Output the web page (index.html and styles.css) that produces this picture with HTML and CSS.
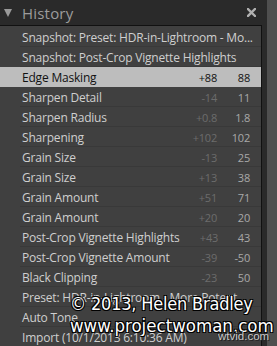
FILE: index.html
```html
<!DOCTYPE html>
<html lang="en">

<head>
    <meta charset="UTF-8">
    <title>History</title>
    <link rel="stylesheet" href="styles.css">
</head>

<body>
    <div class="panel">
        <div class="main">
            <div class="header">
                <span class="arrow"></span>
                <h1>History</h1>
                <svg class="close" width="9" height="9" viewBox="0 0 9 9">
                    <path d="M1 1 L8 8 M8 1 L1 8" stroke="#b0b0b0" stroke-width="2.4" stroke-linecap="square" />
                </svg>
            </div>
            <ul class="list">
                <li><span class="name">Snapshot: Preset: HDR-in-Lightroom - Mo...</span></li>
                <li><span class="name">Snapshot: Post-Crop Vignette Highlights</span></li>
                <li class="selected"><span class="name">Edge Masking</span><span class="delta">+88</span><span class="value">88</span></li>
                <li><span class="name">Sharpen Detail</span><span class="delta">-14</span><span class="value">11</span></li>
                <li><span class="name">Sharpen Radius</span><span class="delta">+0.8</span><span class="value">1.8</span></li>
                <li><span class="name">Sharpening</span><span class="delta">+102</span><span class="value">102</span></li>
                <li><span class="name">Grain Size</span><span class="delta">-13</span><span class="value">25</span></li>
                <li><span class="name">Grain Size</span><span class="delta">+13</span><span class="value">38</span></li>
                <li><span class="name">Grain Amount</span><span class="delta">+51</span><span class="value">71</span></li>
                <li><span class="name">Grain Amount</span><span class="delta">+20</span><span class="value">20</span></li>
                <li><span class="name">Post-Crop Vignette Highlights</span><span class="delta">+43</span><span class="value">43</span></li>
                <li><span class="name">Post-Crop Vignette Amount</span><span class="delta">-39</span><span class="value">-50</span></li>
                <li><span class="name">Black Clipping</span><span class="delta">-23</span><span class="value">50</span></li>
                <li><span class="name">Preset: HDR-in-Lightroom - More Potent</span></li>
                <li><span class="name">Auto Tone</span></li>
                <li><span class="name">Import (10/1/2013 6:10:36 AM)</span></li>
            </ul>
        </div>
        <div class="strip"></div>
    </div>

    <!-- watermark -->
    <div class="mark">
        <div class="copy">© 2013, Helen Bradley</div>
        <div class="site">www.projectwoman.com</div>
    </div>
    <div class="tag">wtvid.com</div>
</body>

</html>
```

FILE: styles.css
```css
body {
    margin: 0;
    width: 277px;
    height: 346px;
    overflow: hidden;
    background-color: #2a2a2a;
    font-family: 'Open Sans', sans-serif;
    position: relative;
}

.panel {
    display: flex;
    height: 346px;
}

.main {
    width: 267px;
    background-color: #2a2a2a;
}

.strip {
    width: 10px;
    background-color: #4f4f4f;
}

.header {
    display: flex;
    align-items: center;
    height: 25px;
    padding-left: 4px;
    padding-right: 11px;
}

.arrow {
    width: 0;
    height: 0;
    border-left: 4px solid transparent;
    border-right: 4px solid transparent;
    border-top: 8px solid #9a9a9a;
    margin-top: 1px;
}

.header h1 {
    flex: 1;
    margin: 0 0 0 10px;
    font-size: 15px;
    font-weight: normal;
    color: #9c9c9c;
    letter-spacing: 0.2px;
}

.list {
    list-style: none;
    margin: 0;
    padding: 1px 0 0 0;
    width: 261px;
    height: 320px;
    background-color: #404040;
    border-top: 1px solid #111;
    border-right: 1px solid #111;
    overflow: hidden;
}

.list li {
    display: flex;
    align-items: center;
    height: 20px;
    padding-left: 22px;
    padding-right: 11px;
    font-size: 12px;
    letter-spacing: -0.2px;
    color: #cfcfcf;
    box-shadow: inset 20px 0 0 #404040, inset 0 -1px 0 #393939;
    white-space: nowrap;
}

.list li.selected {
    background-color: #bdbdbd;
    color: #111;
    box-shadow: none;
}

.name {
    flex: 1;
}

.delta {
    width: 40px;
    text-align: right;
    color: #6c6c6c;
    font-size: 11px;
}

.value {
    width: 33px;
    text-align: right;
    color: #a9a9a9;
    font-size: 11px;
}

.selected .delta,
.selected .value {
    color: #111;
}

/* watermark */
.mark {
    position: absolute;
    left: 70px;
    top: 292px;
    color: #fff;
    font-family: 'DejaVu Sans Condensed', 'DejaVu Sans', sans-serif;
    white-space: nowrap;
    text-shadow: 1px 1px 0 #000, -1px -1px 0 #000, 1px -1px 0 #000, -1px 1px 0 #000;
}

.copy {
    font-size: 18px;
    line-height: 24px;
    letter-spacing: -0.2px;
}

.site {
    font-size: 18.5px;
    line-height: 20px;
}

.tag {
    position: absolute;
    left: 218px;
    top: 330px;
    font-family: 'Liberation Sans', sans-serif;
    font-size: 11.5px;
    color: #c8c8c8;
    text-shadow: 1px 1px 0 #222, -1px -1px 0 #222;
}
```
